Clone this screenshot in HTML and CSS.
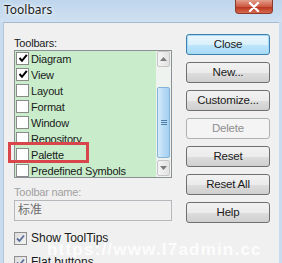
FILE: index.html
```html
<!DOCTYPE html>
<html lang="en">
<head>
  <meta charset="UTF-8">
  <title>Toolbars</title>
  <link rel="stylesheet" href="styles.css">
</head>
<body>
<div class="window">
  <div class="titlebar">
    <span class="title">Toolbars</span>
    <div class="close-x">
      <svg width="12" height="10" viewBox="0 0 12 10"><path d="M2 1 L10 9 M10 1 L2 9" stroke="#fff" stroke-width="2.4" stroke-linecap="round"/></svg>
    </div>
  </div>
  <div class="client">
    <div class="left">
      <div class="label">Toolbars:</div>
      <div class="listbox">
        <ul class="items">
          <li><span class="box on"><svg width="10" height="10" viewBox="0 0 10 10"><path d="M1.5 5 L4 7.8 L8.8 1.8" fill="none" stroke="#000" stroke-width="2"/></svg></span>Diagram</li>
          <li><span class="box on"><svg width="10" height="10" viewBox="0 0 10 10"><path d="M1.5 5 L4 7.8 L8.8 1.8" fill="none" stroke="#000" stroke-width="2"/></svg></span>View</li>
          <li><span class="box"></span>Layout</li>
          <li><span class="box"></span>Format</li>
          <li><span class="box"></span>Window</li>
          <li><span class="box"></span>Repository</li>
          <li><span class="box"></span>Palette</li>
          <li><span class="box"></span>Predefined Symbols</li>
        </ul>
        <div class="scrollbar">
          <div class="arrow"><svg width="7" height="4" viewBox="0 0 7 4"><path d="M0 4 L3.5 0 L7 4 Z" fill="#7b7b7b"/></svg></div>
          <div class="thumb"><span></span><span></span><span></span></div>
          <div class="arrow down"><svg width="7" height="4" viewBox="0 0 7 4"><path d="M0 0 L3.5 4 L7 0 Z" fill="#7b7b7b"/></svg></div>
        </div>
        <div class="marker"></div>
      </div>
      <div class="label dim">Toolbar name:</div>
      <div class="textbox">标准</div>
      <div class="check"><span class="box7"><svg width="9" height="9" viewBox="0 0 9 9"><path d="M1 4.5 L3.5 7 L8 1.5" fill="none" stroke="#5a6e9a" stroke-width="1.8"/></svg></span>Show ToolTips</div>
      <div class="check"><span class="box7"><svg width="9" height="9" viewBox="0 0 9 9"><path d="M1 4.5 L3.5 7 L8 1.5" fill="none" stroke="#5a6e9a" stroke-width="1.8"/></svg></span>Flat buttons</div>
    </div>
    <div class="buttons">
      <div class="btn default">Close</div>
      <div class="btn">New...</div>
      <div class="btn">Customize...</div>
      <div class="btn off">Delete</div>
      <div class="btn">Reset</div>
      <div class="btn">Reset All</div>
      <div class="btn">Help</div>
    </div>
  </div>
  <div class="watermark">https://www.l7admin.cc</div>
</div>
</body>
</html>
```

FILE: styles.css
```css
body {
  margin: 0;
  font-family: 'Liberation Sans', Arial, 'Noto Sans CJK SC', sans-serif;
  font-size: 11px;
  color: #1a1a1a;
}

.window {
  position: relative;
  width: 282px;
  height: 263px;
  overflow: hidden;
  background: #c9dcef;
}

.titlebar {
  height: 22px;
  display: flex;
  justify-content: space-between;
  align-items: flex-start;
  background: linear-gradient(#bed5ec, #cfe1f2);
}

.title {
  font-family: 'Noto Sans', sans-serif;
  font-size: 12px;
  margin: 1px 0 0 4px;
  color: #1b1b1b;
  text-shadow: 0 0 6px #fff, 0 0 3px #fff;
}

.close-x {
  width: 36px;
  height: 13px;
  margin-right: 9px;
  display: flex;
  justify-content: center;
  align-items: center;
  border: 1px solid #8b3a2c;
  border-top: none;
  border-radius: 0 0 4px 4px;
  background: linear-gradient(#e4a08e, #cd5a43 50%, #b8361f 55%, #d86a4c);
}

.client {
  display: flex;
  height: 241px;
  margin: 0 3px;
  border-top: 1px solid #a6b9cc;
  border-left: 1px solid #b4c6d8;
  background: #f0f0f0;
}

.left {
  width: 158px;
  margin-left: 10px;
  padding-top: 14px;
}

.label {
  height: 13px;
  line-height: 13px;
  letter-spacing: -0.2px;
}

.label.dim {
  margin-top: 8px;
  color: #a0a0a0;
}

.listbox {
  position: relative;
  display: flex;
  height: 126px;
  border: 1px solid #8c9195;
  background: #c9edcb;
}

.items {
  flex: 1;
  margin: 0;
  padding: 0;
  list-style: none;
  overflow: hidden;
}

.items li {
  display: flex;
  align-items: center;
  height: 16px;
  letter-spacing: -0.2px;
}

.box {
  width: 11px;
  height: 11px;
  margin: 0 2px 2px 1px;
  border: 1px solid #8a8a8a;
  background: #fff;
  display: flex;
  justify-content: center;
  align-items: center;
}

.scrollbar {
  width: 15px;
  display: flex;
  flex-direction: column;
  background: #eef3ef;
}

.arrow {
  height: 14px;
  margin: 0 1px;
  border: 1px solid #c6c6c6;
  border-radius: 2px;
  background: linear-gradient(to right, #f4f4f4, #e2e2e2);
  display: flex;
  justify-content: center;
  align-items: center;
}

.arrow.down {
  margin-top: 2px;
}

.thumb {
  height: 69px;
  margin: 20px 1px 0;
  border: 1px solid #83b2d6;
  border-radius: 2px;
  background: linear-gradient(to right, #d8ecfa, #b7dbf5 50%, #a5cff0);
  display: flex;
  flex-direction: column;
  justify-content: center;
  align-items: center;
  gap: 1px;
}

.thumb span {
  width: 6px;
  height: 1px;
  background: #4f7ea6;
}

.marker {
  position: absolute;
  left: -7px;
  top: 91px;
  width: 75px;
  height: 15px;
  border: 3px solid #d8454a;
}

.textbox {
  height: 19px;
  margin-top: 1px;
  padding-left: 3px;
  line-height: 19px;
  font-size: 12px;
  color: #6d6d6d;
  border: 1px solid #b5b9bd;
  background: #f0f0f0;
}

.check {
  display: flex;
  align-items: center;
  height: 14px;
  margin-top: 10px;
  font-size: 12px;
}

.check + .check {
  margin-top: 10px;
}

.box7 {
  width: 11px;
  height: 11px;
  margin-right: 4px;
  border: 1px solid #8f8f8f;
  background: linear-gradient(135deg, #dcdcdc, #f4f4f4);
  display: flex;
  justify-content: center;
  align-items: center;
}

.buttons {
  width: 84px;
  margin-left: 14px;
  padding-top: 11px;
  display: flex;
  flex-direction: column;
  gap: 7px;
}

.btn {
  height: 19px;
  line-height: 19px;
  text-align: center;
  font-size: 11.5px;
  letter-spacing: -0.2px;
  border: 1px solid #707070;
  border-radius: 3px;
  background: linear-gradient(#f2f2f2, #ebebeb 50%, #dddddd 51%, #cfcfcf);
}

.btn.default {
  border-color: #3c7fb1;
  box-shadow: inset 0 0 0 1px #a9dcf2;
  background: linear-gradient(#eaf6fd, #d9f0fc 50%, #bee6fd 51%, #a7d9f5);
}

.btn.off {
  color: #8f8f8f;
  border-color: #adb2b5;
  background: #f4f4f4;
}

.watermark {
  position: absolute;
  left: 47px;
  top: 240px;
  font-size: 17px;
  font-weight: bold;
  letter-spacing: 1.2px;
  color: rgba(255, 255, 255, 0.85);
}
```
